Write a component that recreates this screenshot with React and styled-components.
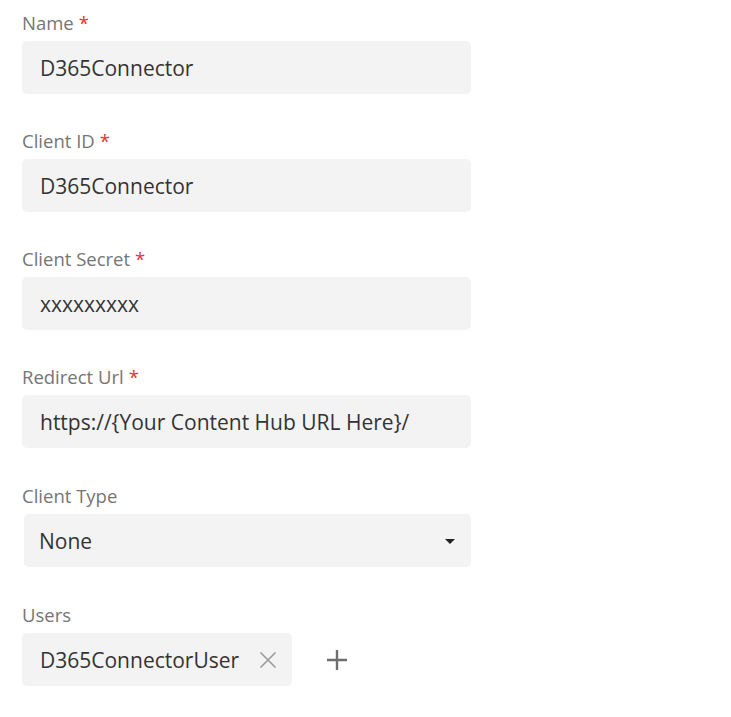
import styled, { createGlobalStyle } from "styled-components"

const GlobalStyle = createGlobalStyle`
  body {
    margin: 0;
    background: #fff;
    font-family: "Open Sans", "Noto Sans", sans-serif;
  }
`

const Form = styled.form`
  display: flex;
  flex-direction: column;
  gap: 36px;
  width: 449px;
  padding: 12px 0 0 22px;
`

const Field = styled.div`
  display: flex;
  flex-direction: column;
  margin-top: ${p => p.$nudge || 0}px;
`

const Label = styled.label`
  font-size: 18.5px;
  line-height: 22px;
  color: #757575;
  margin-bottom: 7px;
`

const Required = styled.span`
  color: #e8322d;
  margin-left: 5px;
`

const Box = styled.div`
  box-sizing: border-box;
  height: 53px;
  display: flex;
  align-items: center;
  background: #f3f3f3;
  border-radius: 5px;
  padding: 0 18px;
  font-size: 21px;
  color: #333;
`

const Select = styled(Box)`
  margin-left: 2px;
  padding: 0 16px 0 15px;
  justify-content: space-between;
`

const Caret = styled.span`
  width: 0;
  height: 0;
  border-left: 5px solid transparent;
  border-right: 5px solid transparent;
  border-top: 5px solid #222;
  margin-top: 2px;
`

const UsersRow = styled.div`
  display: flex;
  align-items: center;
  gap: 34px;
`

const Chip = styled(Box)`
  width: 270px;
  gap: 20px;
  padding-right: 14px;
`

const IconButton = styled.button`
  border: none;
  background: none;
  padding: 0;
  display: flex;
  cursor: pointer;
  color: ${p => p.$color};
`

const fields = [
  { label: "Name", value: "D365Connector" },
  { label: "Client ID", value: "D365Connector" },
  { label: "Client Secret", value: "xxxxxxxxx" },
  { label: "Redirect Url", value: "https://{Your Content Hub URL Here}/" },
]

const App = () => {
  return (
    <>
      <GlobalStyle />
      <Form>
        { fields.map(f => (
          <Field key={ f.label }>
            <Label>{ f.label }<Required>*</Required></Label>
            <Box>{ f.value }</Box>
          </Field>
        )) }
        <Field $nudge={ 1 }>
          <Label>Client Type</Label>
          <Select>None<Caret /></Select>
        </Field>
        <Field $nudge={ 1 }>
          <Label>Users</Label>
          <UsersRow>
            <Chip>
              D365ConnectorUser
              <IconButton type="button" $color="#9a9a9a">
                <svg width="18" height="18" viewBox="0 0 18 18">
                  <path d="M1.5 1.5 L16.5 16.5 M16.5 1.5 L1.5 16.5" stroke="currentColor" strokeWidth="1.6" />
                </svg>
              </IconButton>
            </Chip>
            <IconButton type="button" $color="#6e6e6e">
              <svg width="22" height="22" viewBox="0 0 22 22">
                <path d="M11 1 V21 M1 11 H21" stroke="currentColor" strokeWidth="2.4" />
              </svg>
            </IconButton>
          </UsersRow>
        </Field>
      </Form>
    </>
  )
}

export default App
